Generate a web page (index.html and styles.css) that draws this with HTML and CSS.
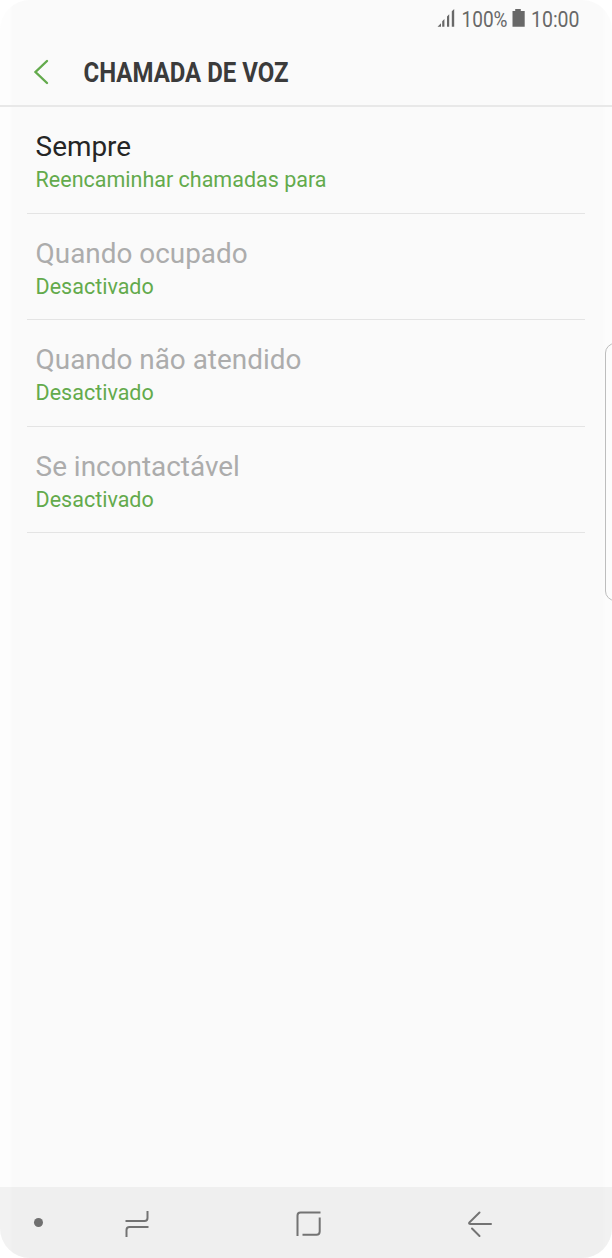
FILE: index.html
```html
<!DOCTYPE html>
<html lang="pt">
<head>
<meta charset="utf-8">
<title>Chamada de voz</title>
<link rel="stylesheet" href="styles.css">
</head>
<body>
<div class="phone">
  <header class="top">
    <svg class="status" viewBox="0 0 152 36">
      <path class="fill" d="M0.5 26.8L4 23.3V26.8ZM5.2 21.3L7.4 19V26.8H5.2ZM10 16.5L12.2 14.3V26.8H10ZM14.8 11.2L17.2 9V26.8H14.8Z"/>
      <text x="24.5" y="26.5" textLength="46" lengthAdjust="spacingAndGlyphs">100%</text>
      <path class="fill" d="M78.2 9H83.8V11H87.7V26.7H75.5V11H78.2Z"/>
      <text x="94" y="26.5" textLength="48.5" lengthAdjust="spacingAndGlyphs">10:00</text>
    </svg>
    <div class="bar">
      <svg class="chevron" viewBox="0 0 16 26"><path d="M14 2L2.5 13L14 24"/></svg>
      <svg class="title" viewBox="0 0 222 42"><text x="0.5" y="30" textLength="205" lengthAdjust="spacingAndGlyphs">CHAMADA DE VOZ</text></svg>
    </div>
  </header>
  <main class="list">
    <section class="row"><div class="name active">Sempre</div><div class="value">Reencaminhar chamadas para</div></section>
    <section class="row"><div class="name">Quando ocupado</div><div class="value">Desactivado</div></section>
    <section class="row"><div class="name">Quando não atendido</div><div class="value">Desactivado</div></section>
    <section class="row"><div class="name">Se incontactável</div><div class="value">Desactivado</div></section>
  </main>
  <footer class="nav">
    <span class="dot"></span>
    <svg class="recents" viewBox="0 0 24 28"><path d="M0.5 11H19.5Q22.5 11 22.5 8V1M23.5 17H4.5Q1.5 17 1.5 20V27"/></svg>
    <svg class="home" viewBox="0 0 26 26"><path d="M1.5 25V4.5Q1.5 1.5 4.5 1.5H24.5M23.7 6.5V20.5Q23.7 23.7 20.5 23.7H6.5"/></svg>
    <svg class="back" viewBox="0 0 26 28"><path d="M12.5 2.5L2.3 12.5Q1.5 14 3.5 14H24M5 18.5L12.5 26"/></svg>
  </footer>
  <div class="edge-handle"></div>
</div>
</body>
</html>
```
FILE: styles.css
```css
body {
  margin: 0;
  background: #fff;
  font-family: Roboto, sans-serif;
}
.phone {
  position: relative;
  display: flex;
  flex-direction: column;
  width: 612px;
  height: 1258px;
  overflow: hidden;
  border-radius: 30px;
  background: linear-gradient(90deg, #fdfdfd 0, #fdfdfd 10px, #fafafa 12px, #fafafa 602px, #fcfcfc 606px);
}
.top {
  display: flex;
  flex-direction: column;
  height: 105px;
  border-bottom: 2px solid #e8e8e8;
}
.status {
  align-self: flex-end;
  width: 152px;
  height: 36px;
  margin-right: 23px;
  font-size: 21.5px;
  fill: #686868;
}
.bar {
  display: flex;
  align-items: center;
  padding: 16px 0 0 32.5px;
}
.chevron {
  width: 16px;
  height: 26px;
  margin-top: -3px;
}
.chevron path {
  fill: none;
  stroke: #63aa4c;
  stroke-width: 2.4;
  stroke-linecap: round;
}
.title {
  width: 222px;
  height: 42px;
  margin-left: 34px;
  font-size: 27.5px;
  font-weight: 700;
  fill: #3b3b3b;
}
.list {
  flex: 1;
  padding: 0 27px;
}
.row {
  box-sizing: border-box;
  height: 106.5px;
  padding: 23px 8.6px 0;
  border-bottom: 1px solid #e4e4e4;
}
.name {
  font-size: 27.9px;
  line-height: 34px;
  color: #acacac;
}
.name.active {
  color: #252525;
}
.value {
  font-size: 21.5px;
  line-height: 32px;
  color: #63aa4c;
}
.nav {
  display: flex;
  align-items: center;
  height: 71px;
  padding-left: 34px;
  background: linear-gradient(90deg, #f2f2f2 0, #f2f2f2 10px, #efefef 12px, #efefef 602px, #f1f1f1 606px);
}
.nav path {
  fill: none;
  stroke: #737373;
  stroke-width: 2;
  stroke-linecap: butt;
}
.nav .back path {
  stroke-linecap: round;
}
.dot {
  width: 9px;
  height: 9px;
  border-radius: 50%;
  background: #707070;
}
.recents {
  width: 24px;
  height: 28px;
  margin: 2px 0 0 82px;
}
.home {
  width: 26px;
  height: 26px;
  margin: 2px 0 0 147px;
}
.back {
  width: 26px;
  height: 28px;
  margin: 2px 0 0 145px;
}
.edge-handle {
  position: absolute;
  top: 343px;
  right: -14px;
  box-sizing: border-box;
  width: 21px;
  height: 258px;
  border: 1px solid #bdbdbd;
  border-radius: 10px;
}
```
